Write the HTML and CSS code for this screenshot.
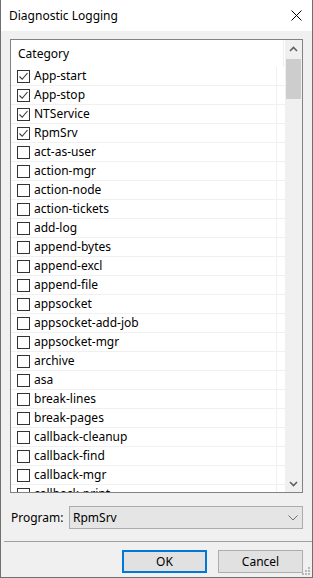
FILE: index.html
```html
<!DOCTYPE html>
<html lang="en">
<head>
    <meta charset="UTF-8">
    <title>Diagnostic Logging</title>
    <link rel="stylesheet" href="styles.css">
</head>
<body>
    <div class="dialog">
        <div class="titlebar">
            <span class="title">Diagnostic Logging</span>
            <svg class="close" width="11" height="11" viewBox="0 0 11 11">
                <path d="M0.5 0.5 L10.5 10.5 M10.5 0.5 L0.5 10.5" stroke="#000" stroke-width="1" fill="none"/>
            </svg>
        </div>

        <div class="content">
            <div class="listbox">
                <div class="list">
                    <div class="header">
                        <div class="cell">Category</div>
                        <div class="filler"></div>
                    </div>
                    <div id="rows"></div>
                </div>
                <div class="scrollbar">
                    <div class="arrow">
                        <svg width="9" height="6" viewBox="0 0 9 6"><path d="M1 5 L4.5 1.5 L8 5" stroke="#606060" stroke-width="1.6" fill="none"/></svg>
                    </div>
                    <div class="track">
                        <div class="thumb"></div>
                    </div>
                    <div class="arrow">
                        <svg width="9" height="6" viewBox="0 0 9 6"><path d="M1 1 L4.5 4.5 L8 1" stroke="#606060" stroke-width="1.6" fill="none"/></svg>
                    </div>
                </div>
            </div>

            <div class="program-row">
                <label class="program-label">Program:</label>
                <div class="select">
                    <span>RpmSrv</span>
                    <svg width="10" height="6" viewBox="0 0 10 6"><path d="M0.5 0.5 L5 5 L9.5 0.5" stroke="#707070" stroke-width="1" fill="none"/></svg>
                </div>
            </div>
        </div>

        <div class="separator"></div>

        <div class="buttons">
            <button class="btn btn-default">OK</button>
            <button class="btn">Cancel</button>
        </div>

        <svg class="grip" width="9" height="9" viewBox="0 0 9 9">
            <rect x="6" y="0" width="2" height="2" fill="#b8b8b8"/>
            <rect x="3" y="3" width="2" height="2" fill="#b8b8b8"/>
            <rect x="6" y="3" width="2" height="2" fill="#b8b8b8"/>
            <rect x="0" y="6" width="2" height="2" fill="#b8b8b8"/>
            <rect x="3" y="6" width="2" height="2" fill="#b8b8b8"/>
            <rect x="6" y="6" width="2" height="2" fill="#b8b8b8"/>
        </svg>
    </div>

    <script>
        var categories = [
            ['App-start', true], ['App-stop', true], ['NTService', true], ['RpmSrv', true],
            ['act-as-user'], ['action-mgr'], ['action-node'], ['action-tickets'],
            ['add-log'], ['append-bytes'], ['append-excl'], ['append-file'],
            ['appsocket'], ['appsocket-add-job'], ['appsocket-mgr'], ['archive'],
            ['asa'], ['break-lines'], ['break-pages'], ['callback-cleanup'],
            ['callback-find'], ['callback-mgr'], ['callback-print']
        ];
        var rows = document.getElementById('rows');
        categories.forEach(function(c) {
            var row = document.createElement('div');
            row.className = 'row';
            row.innerHTML = '<div class="cell"><span class="check">' +
                (c[1] ? '<svg width="11" height="11" viewBox="0 0 11 11"><path d="M1.5 5.5 L4.2 8.3 L9.5 2" stroke="#333" stroke-width="1.1" fill="none"/></svg>' : '') +
                '</span><span class="name"></span></div><div class="filler"></div>';
            row.querySelector('.name').textContent = c[0];
            rows.appendChild(row);
        });
    </script>
</body>
</html>
```

FILE: styles.css
```css
body {
    margin: 0;
    font-family: "Noto Sans", "Open Sans", sans-serif;
    font-size: 12px;
    color: #000;
}
.dialog {
    position: relative;
    width: 313px;
    height: 578px;
    box-sizing: border-box;
    border: 1px solid #707070;
    border-top: none;
    background: #f0f0f0;
    overflow: hidden;
}
.titlebar {
    height: 31px;
    background: #fff;
    display: flex;
    align-items: center;
    justify-content: space-between;
    padding: 0 10px 0 8px;
}
.title {
    font-size: 12px;
    margin-top: -1px;
}
.close {
    display: block;
    margin-top: -1px;
}
.content {
    padding: 8px 9px 0 9px;
}
.listbox {
    display: flex;
    height: 454px;
    box-sizing: border-box;
    border: 1px solid #828282;
    background: #fff;
}
.list {
    flex: 1;
    overflow: hidden;
}
.header {
    display: flex;
    height: 27px;
}
.header .cell {
    padding-left: 7px;
    line-height: 26px;
}
.row {
    display: flex;
    height: 18px;
    border-bottom: 1px solid #f0f0f0;
}
.cell {
    width: 265px;
    border-right: 1px solid #f0f0f0;
    display: flex;
    align-items: center;
    white-space: nowrap;
}
.row .cell {
    padding-left: 6px;
    box-sizing: border-box;
    width: 266px;
}
.filler {
    flex: 1;
}
.check {
    width: 13px;
    height: 13px;
    box-sizing: border-box;
    border: 1px solid #333;
    background: #fff;
    display: flex;
    align-items: center;
    justify-content: center;
    margin-right: 4px;
}
.check svg {
    display: block;
}
.name {
    line-height: 18px;
}
.scrollbar {
    width: 17px;
    background: #f0f0f0;
    display: flex;
    flex-direction: column;
}
.arrow {
    height: 17px;
    display: flex;
    align-items: center;
    justify-content: center;
}
.track {
    flex: 1;
    padding: 2px 1px 0 1px;
}
.thumb {
    height: 40px;
    background: #cdcdcd;
}
.program-row {
    display: flex;
    align-items: center;
    margin-top: 13px;
}
.program-label {
    width: 58px;
    padding-left: 1px;
}
.select {
    flex: 1;
    height: 23px;
    box-sizing: border-box;
    border: 1px solid #acacac;
    background: #e5e5e5;
    display: flex;
    align-items: center;
    justify-content: space-between;
    padding: 0 4px 0 3px;
}
.separator {
    height: 1px;
    background: #a0a0a0;
    margin: 12px 0 0 3px;
}
.buttons {
    display: flex;
    justify-content: flex-end;
    gap: 11px;
    padding: 8px 9px 0 0;
}
.btn {
    width: 85px;
    height: 23px;
    box-sizing: border-box;
    border: 1px solid #adadad;
    background: #e1e1e1;
    font-family: inherit;
    font-size: 12px;
    padding: 0;
    color: #000;
}
.btn-default {
    border: 2px solid #0078d7;
}
.grip {
    position: absolute;
    right: 1px;
    bottom: 1px;
}
```
